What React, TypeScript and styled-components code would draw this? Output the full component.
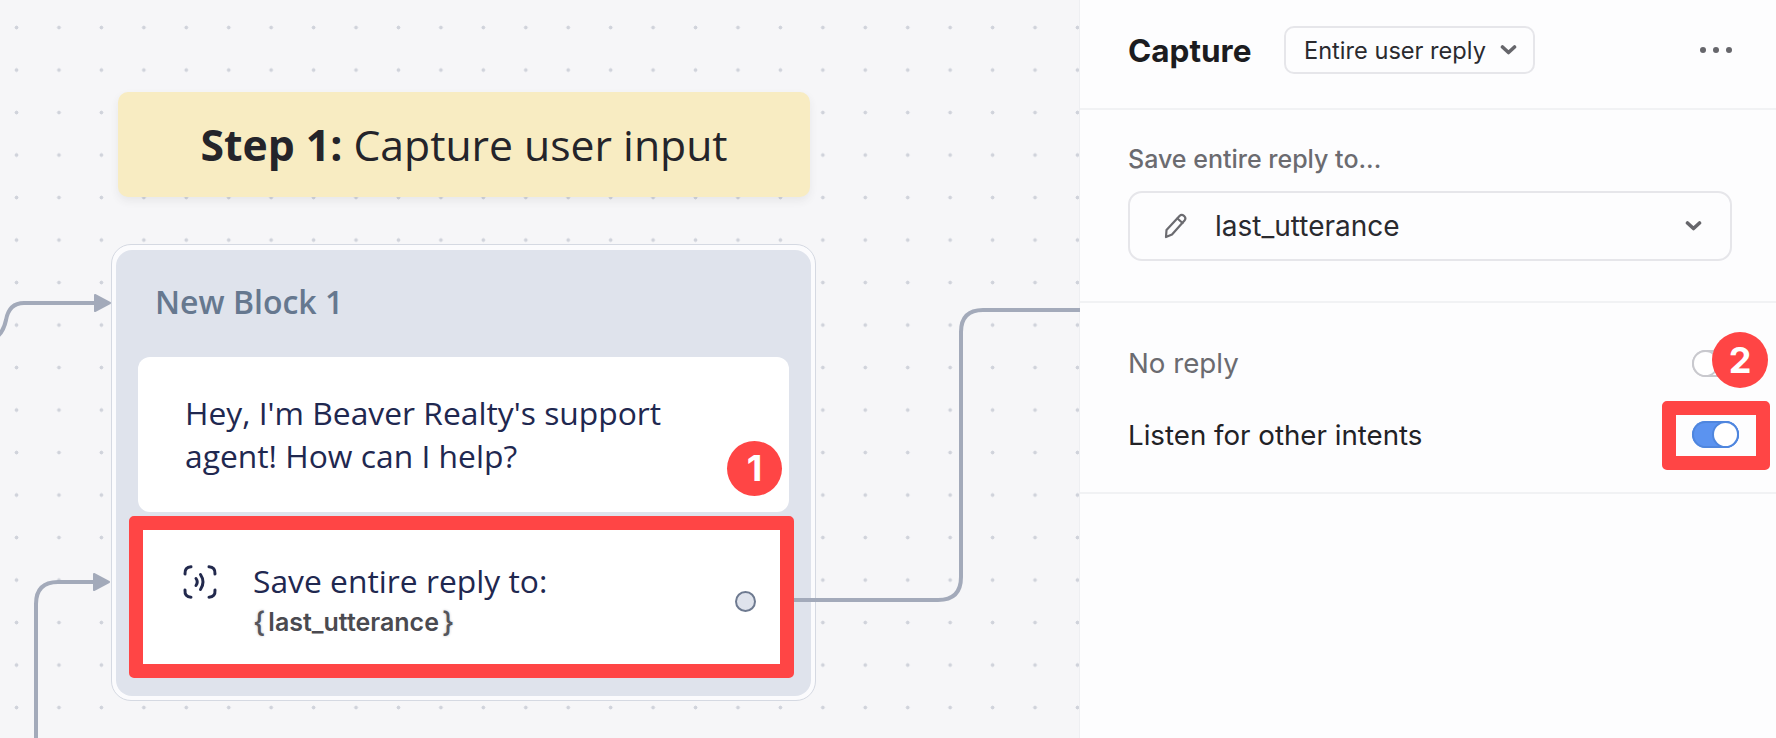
import styled, { createGlobalStyle } from "styled-components";

const GlobalStyle = createGlobalStyle`
    html, body {
        margin: 0;
        padding: 0;
        background: #fdfdfe;
    }
    * {
        box-sizing: border-box;
    }
`;

function Chevron() {
    return (
        <svg width="17" height="10" viewBox="0 0 17 10" fill="none">
            <path d="M2.5 2 L8.5 7.5 L14.5 2" stroke="#66666b" strokeWidth="3.6" strokeLinejoin="round" strokeLinecap="round" />
        </svg>
    );
}

function PencilIcon() {
    return (
        <svg width="26" height="26" viewBox="0 0 26 26" fill="none" stroke="#6b6b70" strokeWidth="2.2" strokeLinejoin="round" strokeLinecap="round">
            <path d="M3 24 L3.5 17 L16.5 3 Q18.5 1 21 2.8 Q23.5 5 21.5 7.5 L9 21.5 Z" />
            <path d="M14.5 5.5 L19.5 10" />
        </svg>
    );
}

function CaptureIcon() {
    return (
        <svg width="34" height="34" viewBox="0 0 34 34" fill="none" stroke="#22294d" strokeWidth="3" strokeLinecap="round">
            <path d="M2 9 Q1.5 2 8 1.8" />
            <path d="M26 1.8 Q32.5 2 32 9" />
            <path d="M2 25 Q1.5 32 8 32.2" />
            <path d="M26 32.2 Q32.5 32 32 25" />
            <path d="M13 13.5 Q15.5 17 13 20.5" />
            <path d="M17.5 9.5 Q22.5 17 17.5 24.5" />
        </svg>
    );
}

function Connectors() {
    return (
        <Wires viewBox="0 0 1080 738" fill="none" stroke="#a3aaba" strokeWidth="4">
            <path d="M-2 336 Q4 330 6 320 Q9 303 24 303 H96" />
            <path d="M36 740 V604 Q36 582 58 582 H96" />
            <path d="M794 600 H938 Q961 600 961 577 V332 Q961 310 983 310 H1080" />
            <path d="M95 295 L110 303 L95 311 Z" fill="#a3aaba" stroke="#a3aaba" strokeWidth="2" strokeLinejoin="round" />
            <path d="M94 574 L109 582 L94 590 Z" fill="#a3aaba" stroke="#a3aaba" strokeWidth="2" strokeLinejoin="round" />
        </Wires>
    );
}

export default function App() {
    return (
        <>
            <GlobalStyle />
            <Page>
                <Canvas>
                    <StickyNote>
                        <strong>Step 1:</strong> Capture user input
                    </StickyNote>
                    <BlockFrame>
                        <BlockBody>
                            <BlockTitle>New Block 1</BlockTitle>
                            <SpeakStep>
                                Hey, I'm Beaver Realty's support
                                <br />
                                agent! How can I help?
                                <StepBadge>1</StepBadge>
                            </SpeakStep>
                            <CaptureStep>
                                <CaptureIcon />
                                <CaptureText>
                                    <CaptureTitle>Save entire reply to:</CaptureTitle>
                                    <VariableLine>
                                        <Brace>{"{"}</Brace>
                                        <span>last_utterance</span>
                                        <Brace>{"}"}</Brace>
                                    </VariableLine>
                                </CaptureText>
                                <Port />
                            </CaptureStep>
                        </BlockBody>
                    </BlockFrame>
                    <Connectors />
                </Canvas>
                <Panel>
                    <PanelHeader>
                        <PanelTitle>Capture</PanelTitle>
                        <TypeSelect>
                            Entire user reply
                            <Chevron />
                        </TypeSelect>
                        <MoreDots>
                            <Dot />
                            <Dot />
                            <Dot />
                        </MoreDots>
                    </PanelHeader>
                    <SaveSection>
                        <FieldLabel>Save entire reply to...</FieldLabel>
                        <VariableSelect>
                            <PencilIcon />
                            <VariableName>last_utterance</VariableName>
                            <Chevron />
                        </VariableSelect>
                    </SaveSection>
                    <OptionsSection>
                        <OptionRow>
                            <OptionLabel $muted>No reply</OptionLabel>
                            <Toggle $on={false}>
                                <Knob $on={false} />
                            </Toggle>
                            <PanelBadge>2</PanelBadge>
                        </OptionRow>
                        <OptionRow>
                            <OptionLabel>Listen for other intents</OptionLabel>
                            <ToggleHighlight>
                                <Toggle $on>
                                    <Knob $on />
                                </Toggle>
                            </ToggleHighlight>
                        </OptionRow>
                    </OptionsSection>
                </Panel>
            </Page>
        </>
    );
}

const Page = styled.div`
    display: flex;
    width: 1776px;
    height: 738px;
    overflow: hidden;
`;
const Canvas = styled.div`
    position: relative;
    width: 1080px;
    flex-shrink: 0;
    background-color: #f6f6f8;
    background-image: radial-gradient(circle, #d0d3db 1.7px, transparent 2.2px);
    background-size: 42.45px 42.5px;
    background-position: -4.7px 6.3px;
    border-right: 1px solid #eeeff2;
`;
const Wires = styled.svg`
    position: absolute;
    inset: 0;
    width: 1080px;
    height: 738px;
    pointer-events: none;
`;
const StickyNote = styled.div`
    position: absolute;
    left: 118px;
    top: 92px;
    width: 692px;
    height: 105px;
    display: flex;
    align-items: center;
    justify-content: center;
    white-space: pre;
    border-radius: 10px;
    background: #f8ecc2;
    box-shadow: 0 4px 8px rgba(60, 60, 70, 0.08);
    color: #24242a;
    font-family: "Open Sans", sans-serif;
    font-size: 42.7px;

    strong {
        font-weight: 700;
    }
`;
const BlockFrame = styled.div`
    position: absolute;
    left: 111px;
    top: 244px;
    width: 705px;
    height: 457px;
    padding: 5px 4px 4px;
    border: 1px solid #d5d9e2;
    border-radius: 20px;
    background: #fbfbfd;
`;
const BlockBody = styled.div`
    height: 100%;
    padding: 0 22px;
    border-radius: 16px;
    background: #dfe3ec;
    font-family: "Open Sans", sans-serif;
`;
const BlockTitle = styled.div`
    height: 107px;
    padding: 32px 0 0 17px;
    color: #66788f;
    font-size: 32px;
    font-weight: 600;
    line-height: 40px;
`;
const SpeakStep = styled.div`
    position: relative;
    height: 155px;
    padding: 34px 0 0 47px;
    border-radius: 12px;
    background: #fff;
    color: #1f2850;
    font-size: 31.8px;
    line-height: 43px;
`;
const StepBadge = styled.div`
    position: absolute;
    right: 7px;
    top: 84px;
    width: 55px;
    height: 55px;
    display: flex;
    align-items: center;
    justify-content: center;
    border-radius: 50%;
    background: #ff4545;
    color: #fff;
    font-family: Inter, sans-serif;
    font-size: 36px;
    font-weight: 700;
`;
const CaptureStep = styled.div`
    display: flex;
    align-items: flex-start;
    height: 162px;
    margin: 4px -5px 0 -9px;
    padding: 35px 24px 0 40px;
    border: 14px solid #ff4545;
    border-radius: 5px;
    background: #fff;
`;
const CaptureText = styled.div`
    display: flex;
    flex-direction: column;
    flex: 1;
    margin-left: 36px;
    margin-top: -3px;
`;
const CaptureTitle = styled.div`
    color: #1f2850;
    font-size: 31.8px;
    line-height: 38px;
`;
const VariableLine = styled.div`
    display: flex;
    align-items: center;
    gap: 3px;
    margin-top: 6px;
    color: #4a4a50;
    font-family: Inter, sans-serif;
    font-size: 25px;
    font-weight: 600;
    line-height: 32px;
`;
const Brace = styled.span`
    color: #55555b;
    font-size: 28px;
    font-weight: 500;
    text-shadow: 0 0 3px #c4c4ca;
`;
const Port = styled.div`
    width: 21px;
    height: 21px;
    margin-top: 26px;
    border: 2px solid #6e7a90;
    border-radius: 50%;
    background: #dfe3ec;
`;
const Panel = styled.div`
    flex: 1;
    background: #fdfdfe;
    font-family: Inter, sans-serif;
`;
const PanelHeader = styled.div`
    display: flex;
    align-items: center;
    height: 110px;
    padding: 0 44px 8px 48px;
    border-bottom: 2px solid #f1f2f4;
`;
const PanelTitle = styled.div`
    width: 156px;
    color: #1c1c20;
    font-size: 31.5px;
    font-weight: 700;
`;
const TypeSelect = styled.div`
    display: flex;
    align-items: center;
    justify-content: space-between;
    width: 251px;
    height: 48px;
    padding: 0 16px 0 18px;
    border: 2px solid #e6e6ea;
    border-radius: 10px;
    color: #2a2a2f;
    font-size: 23.6px;
`;
const MoreDots = styled.div`
    display: flex;
    gap: 7px;
    margin-left: auto;
`;
const Dot = styled.span`
    width: 6px;
    height: 6px;
    border-radius: 50%;
    background: #66666b;
`;
const SaveSection = styled.div`
    height: 193px;
    padding: 34px 44px 0 48px;
    border-bottom: 2px solid #f1f2f4;
`;
const FieldLabel = styled.div`
    margin-bottom: 17px;
    color: #6b6b70;
    font-size: 25px;
    font-weight: 500;
    line-height: 30px;
`;
const VariableSelect = styled.div`
    display: flex;
    align-items: center;
    height: 70px;
    padding: 0 28px 0 33px;
    border: 2px solid #e6e6ea;
    border-radius: 14px;
`;
const VariableName = styled.div`
    flex: 1;
    margin-left: 26px;
    color: #2a2a2f;
    font-size: 28px;
`;
const OptionsSection = styled.div`
    height: 191px;
    padding: 24px 37px 0 48px;
    border-bottom: 2px solid #f1f2f4;
`;
const OptionRow = styled.div`
    position: relative;
    display: flex;
    align-items: center;
    justify-content: space-between;
    height: 72px;
`;
const OptionLabel = styled.div<{ $muted?: boolean }>`
    color: ${(p) => (p.$muted ? "#6b6b70" : "#222226")};
    font-size: 27.7px;
`;
const Toggle = styled.div<{ $on: boolean }>`
    display: flex;
    justify-content: ${(p) => (p.$on ? "flex-end" : "flex-start")};
    width: 47px;
    height: 27px;
    border-radius: 14px;
    background: ${(p) => (p.$on ? "#5b93f0" : "#fdfdfe")};
    box-shadow: inset 0 0 0 2px ${(p) => (p.$on ? "#4f86de" : "#c9c9ce")};
`;
const Knob = styled.div<{ $on: boolean }>`
    width: 27px;
    height: 27px;
    border: 2px solid ${(p) => (p.$on ? "#4f86de" : "#c9c9ce")};
    border-radius: 50%;
    background: #fff;
`;
const ToggleHighlight = styled.div`
    margin: -21px -31px -21px -30px;
    padding: 6px 17px 8px 16px;
    border: 14px solid #ff4545;
    border-radius: 5px;
`;
const PanelBadge = styled.div`
    position: absolute;
    right: -29px;
    top: 5px;
    width: 56px;
    height: 56px;
    display: flex;
    align-items: center;
    justify-content: center;
    border-radius: 50%;
    background: #ff4545;
    color: #fff;
    font-size: 36px;
    font-weight: 700;
`;
